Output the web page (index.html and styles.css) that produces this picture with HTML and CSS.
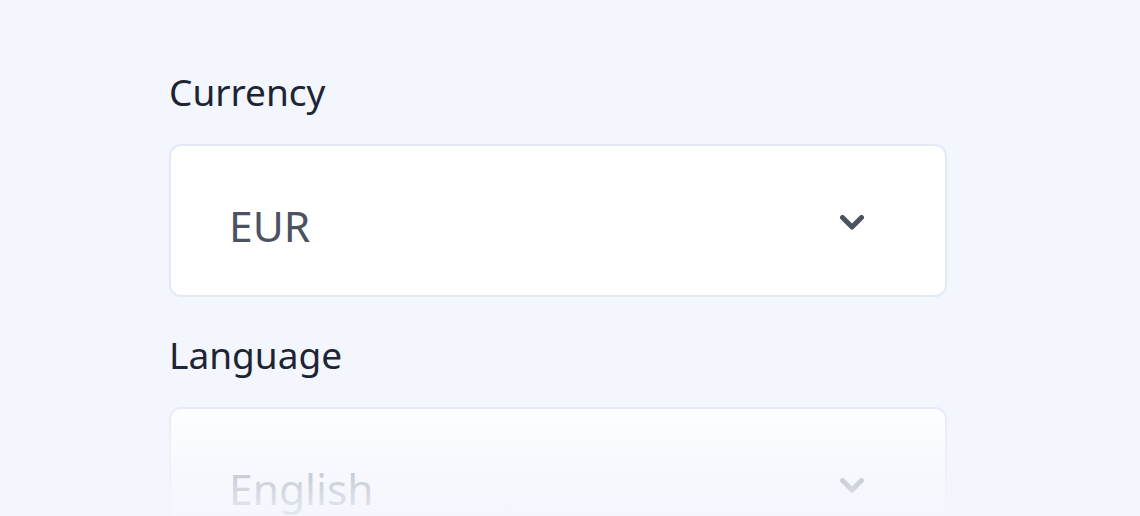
FILE: index.html
```html
<!DOCTYPE html>
<html lang="en">
<head>
<meta charset="utf-8">
<title>Settings</title>
<link rel="stylesheet" href="styles.css">
</head>
<body>
<main class="page">
  <div class="form">
    <div class="field">
      <label class="label">Currency</label>
      <div class="select">
        <span class="value">EUR</span>
        <svg class="chevron" width="24" height="15" viewBox="0 0 24 15" aria-hidden="true">
          <polyline points="2.5,2.5 12,12 21.5,2.5" fill="none" stroke="currentColor" stroke-width="5" stroke-linecap="round" stroke-linejoin="round"/>
        </svg>
      </div>
    </div>
    <div class="field">
      <label class="label">Language</label>
      <div class="select">
        <span class="value">English</span>
        <svg class="chevron" width="24" height="15" viewBox="0 0 24 15" aria-hidden="true">
          <polyline points="2.5,2.5 12,12 21.5,2.5" fill="none" stroke="currentColor" stroke-width="5" stroke-linecap="round" stroke-linejoin="round"/>
        </svg>
      </div>
    </div>
  </div>
  <div class="fade"></div>
</main>
</body>
</html>
```

FILE: styles.css
```css
html, body {
  margin: 0;
  padding: 0;
  height: 100%;
  overflow: hidden;
}
body {
  background: #f3f6fd;
  font-family: "Noto Sans", "Open Sans", sans-serif;
}
.page {
  position: relative;
  height: 516px;
  overflow: hidden;
}
.form {
  width: 778px;
  padding: 66px 0 0 169px;
  display: flex;
  flex-direction: column;
  gap: 32px;
}
.field {
  display: flex;
  flex-direction: column;
  gap: 27px;
}
.label {
  font-size: 37px;
  line-height: 51px;
  color: #1d2433;
}
.select {
  box-sizing: border-box;
  height: 153px;
  background: #ffffff;
  border: 2px solid #e4e9f6;
  border-radius: 12px;
  display: flex;
  align-items: center;
  justify-content: space-between;
  padding: 0 81px 0 58px;
}
.value {
  font-size: 42.5px;
  color: #4b5262;
  padding-top: 10px;
}
.chevron {
  color: #4b5262;
  margin-top: 4px;
}
.fade {
  position: absolute;
  left: 0;
  right: 0;
  top: 395px;
  bottom: 0;
  background: linear-gradient(to bottom, rgba(243, 246, 253, 0) 0%, rgba(243, 246, 253, 0.72) 60%, rgba(243, 246, 253, 0.92) 100%);
}
```
